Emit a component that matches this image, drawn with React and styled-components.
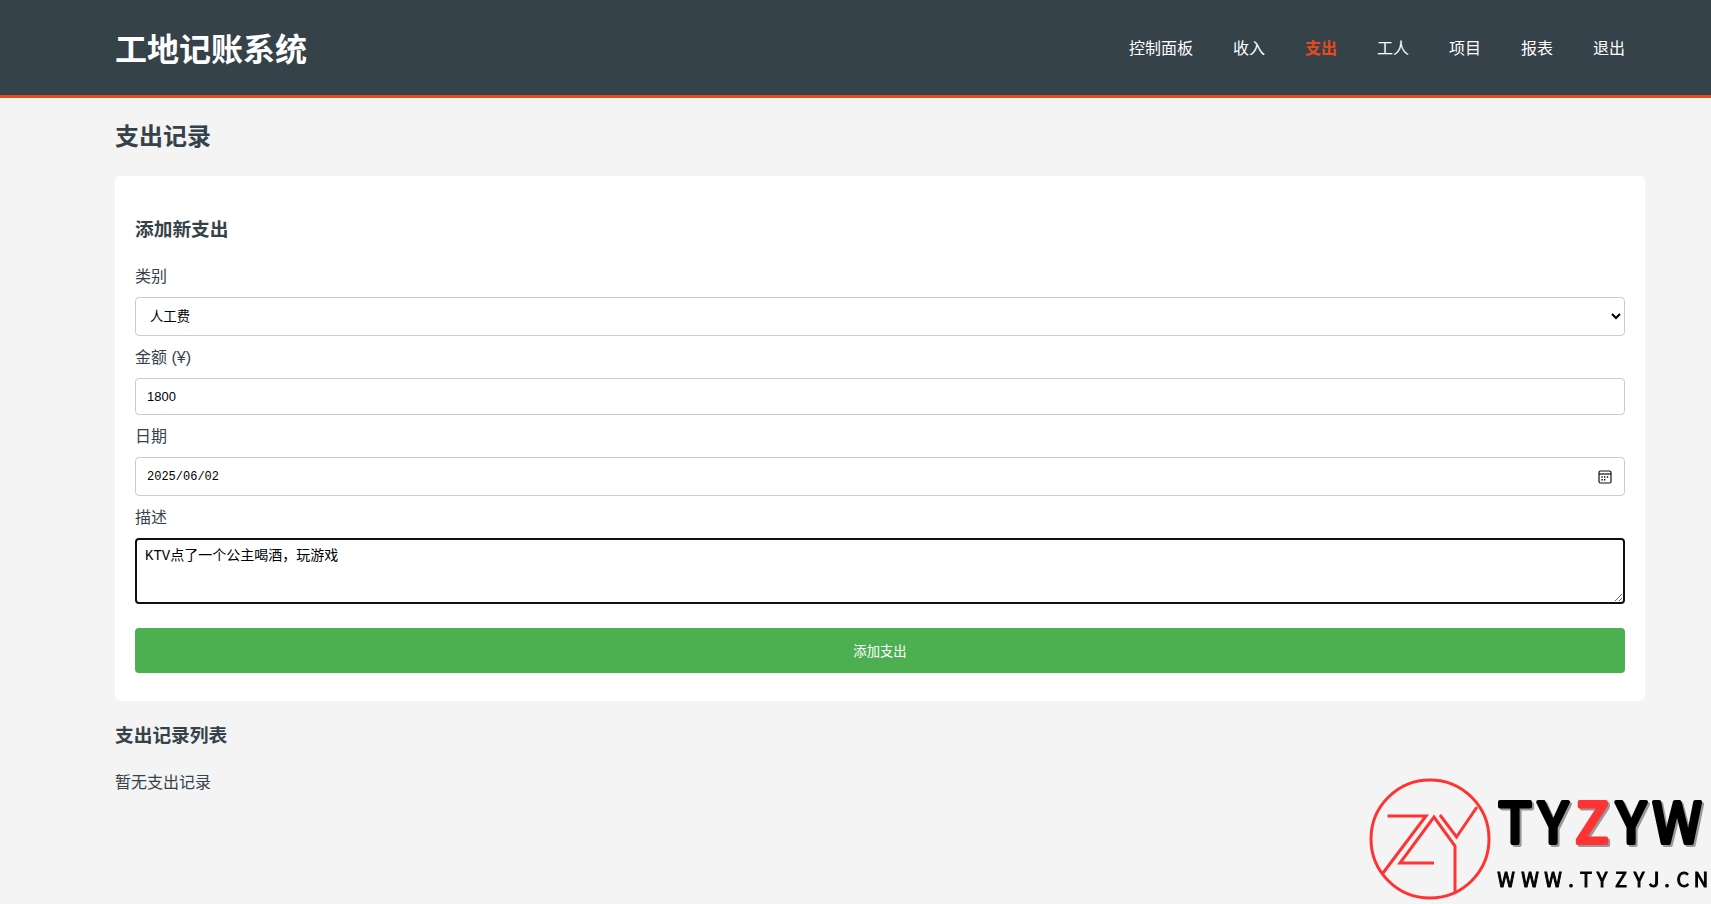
import React, { useState } from "react";
import styled, { createGlobalStyle, ThemeProvider } from "styled-components";

const theme = {
  colors: {
    dark: "#35424a",
    accent: "#e8491d",
    page: "#f4f4f4",
    border: "#cccccc",
    green: "#4caf50",
    red: "#ff3333",
  },
  fonts: {
    body: `"Liberation Sans", "Noto Sans CJK SC", sans-serif`,
    mono: `"Liberation Mono", "Noto Sans CJK SC", monospace`,
  },
};

const GlobalStyle = createGlobalStyle`
  * {
    box-sizing: border-box;
  }

  body {
    margin: 0;
    background: ${({ theme }) => theme.colors.page};
    color: ${({ theme }) => theme.colors.dark};
    font-family: ${({ theme }) => theme.fonts.body};
    font-size: 16px;
    line-height: 26px;
  }
`;

const StyledHeader = styled.header`
  display: flex;
  align-items: center;
  justify-content: space-between;
  padding: 21px 66px 19px 115px;
  background: ${({ theme }) => theme.colors.dark};
  border-bottom: 3px solid ${({ theme }) => theme.colors.accent};
  color: white;

  h1 {
    margin: 0;
    padding-top: 4px;
    font-size: 32px;
    line-height: 51px;
  }

  ul {
    display: flex;
    margin: 0;
    padding: 0;
    list-style: none;
  }

  li {
    padding: 0 20px;
  }
`;

const NavLink = styled.a`
  color: ${({ theme, $current }) => ($current ? theme.colors.accent : "white")};
  font-weight: ${({ $current }) => ($current ? 700 : 400)};
  text-decoration: none;
`;

const StyledMain = styled.main`
  padding: 0 66px 0 115px;
`;

const PageTitle = styled.h2`
  margin: 20px 0;
  font-size: 24px;
  line-height: 38px;
`;

const SectionTitle = styled.h3`
  margin: ${({ $inCard }) => ($inCard ? "19px 0 10px" : "20px 0 19px")};
  line-height: 30px;
`;

const Card = styled.section`
  display: flow-root;
  padding: 20px 20px 28px;
  background: white;
  border-radius: 5px;
`;

const StyledForm = styled.form`
  display: flex;
  flex-direction: column;

  label {
    padding: 9px 0 7px;
  }
`;

const fieldBox = ({ theme }) => `
  width: 100%;
  border: 1px solid ${theme.colors.border};
  border-radius: 4px;
  background: white;
  color: black;
`;

const Select = styled.select`
  ${fieldBox}
  height: 39px;
  padding: 10px;
  font-family: ${({ theme }) => theme.fonts.body};
`;

const Input = styled.input`
  ${fieldBox}
  height: ${({ $mono }) => ($mono ? "39px" : "37px")};
  padding: 10px 11px;
  font-family: ${({ theme, $mono }) =>
    $mono ? theme.fonts.mono : theme.fonts.body};
  font-size: ${({ $mono }) => ($mono ? "12px" : "13px")};
`;

const DateField = styled.div`
  position: relative;

  input {
    display: block;
  }

  button {
    position: absolute;
    top: 0;
    right: 13px;
    bottom: 0;
    display: flex;
    align-items: center;
    padding: 0;
    border: 0;
    background: none;
    cursor: pointer;
  }
`;

const TextArea = styled.textarea`
  ${fieldBox}
  height: 66px;
  padding: 7px 8px;
  border: 2px solid #101010;
  outline: none;
  font-family: ${({ theme }) => theme.fonts.mono};
  font-size: 14px;
  line-height: 18px;
  resize: vertical;
`;

const SubmitButton = styled.button`
  height: 45px;
  margin-top: 24px;
  border: 0;
  border-radius: 4px;
  background: ${({ theme }) => theme.colors.green};
  color: white;
  font-family: ${({ theme }) => theme.fonts.body};
  cursor: pointer;
`;

const EmptyText = styled.p`
  margin: 0;
`;

const Watermark = styled.svg`
  position: fixed;
  right: 0;
  bottom: 0;
  pointer-events: none;

  .mark {
    fill: none;
    stroke: ${({ theme }) => theme.colors.red};
    stroke-width: 3;
  }

  text {
    font-family: "Noto Sans CJK SC", sans-serif;
    text-anchor: middle;
  }

  .name {
    filter: drop-shadow(2px 2px 0 #999999);
    font-size: 56px;
    font-weight: 400;
    stroke-width: 4;
    stroke-linejoin: round;
  }

  .site {
    font-size: 20px;
    font-weight: 400;
    stroke: black;
    stroke-width: 1;
  }
`;

const links = [
  { slug: "dashboard", name: "控制面板" },
  { slug: "income", name: "收入" },
  { slug: "expense", name: "支出" },
  { slug: "workers", name: "工人" },
  { slug: "projects", name: "项目" },
  { slug: "reports", name: "报表" },
  { slug: "logout", name: "退出" },
];

const categories = ["人工费", "材料费", "设备费", "其他"];

const Header = ({ current }) => (
  <StyledHeader>
    <h1>工地记账系统</h1>
    <nav>
      <ul>
        {links.map((link) => (
          <li key={link.slug}>
            <NavLink href={`#${link.slug}`} $current={link.slug === current}>
              {link.name}
            </NavLink>
          </li>
        ))}
      </ul>
    </nav>
  </StyledHeader>
);

const CalendarIcon = () => (
  <svg width="14" height="14" viewBox="0 0 14 14" aria-hidden="true">
    <rect
      x="1"
      y="1"
      width="12"
      height="12"
      rx="1.5"
      fill="none"
      stroke="#101010"
      strokeWidth="1.2"
    />
    <path d="M1 4h12" stroke="#101010" strokeWidth="1.2" />
    <path
      d="M6 7h1.4M8.8 7h1.4M3.4 7h1.4M3.4 9.8h1.4M6 9.8h1.4"
      stroke="#101010"
      strokeWidth="1.4"
    />
  </svg>
);

const ExpenseForm = () => {
  const [expense, setExpense] = useState({
    category: "人工费",
    amount: "1800",
    date: "2025/06/02",
    description: "KTV点了一个公主喝酒，玩游戏",
  });

  const handleChange = (e) =>
    setExpense({ ...expense, [e.target.name]: e.target.value });

  return (
    <StyledForm onSubmit={(e) => e.preventDefault()}>
      <label htmlFor="category">类别</label>
      <Select
        id="category"
        name="category"
        value={expense.category}
        onChange={handleChange}
      >
        {categories.map((category) => (
          <option key={category}>{category}</option>
        ))}
      </Select>
      <label htmlFor="amount">金额 (¥)</label>
      <Input
        id="amount"
        name="amount"
        type="number"
        value={expense.amount}
        onChange={handleChange}
      />
      <label htmlFor="date">日期</label>
      <DateField>
        <Input
          $mono
          id="date"
          name="date"
          type="text"
          value={expense.date}
          onChange={handleChange}
        />
        <button type="button" aria-label="选择日期">
          <CalendarIcon />
        </button>
      </DateField>
      <label htmlFor="description">描述</label>
      <TextArea
        id="description"
        name="description"
        value={expense.description}
        onChange={handleChange}
      />
      <SubmitButton type="submit">添加支出</SubmitButton>
    </StyledForm>
  );
};

const NAME_X = [165, 203, 242, 281, 327];
const SITE_X = [156, 180, 203, 221, 236, 252, 271, 289, 304, 317, 333, 351];

const Logo = () => (
  <Watermark width="361" height="144" viewBox="0 0 361 144" aria-hidden="true">
    <circle className="mark" cx="80" cy="79" r="59" />
    <path
      className="mark"
      d="M37.5 56H76L33 113M84 103H50L84 57l21 29v46M90 55l16.5 22L127 47"
    />
    {"TYZYW".split("").map((letter, i) => {
      const color = letter === "Z" ? theme.colors.red : "black";
      return (
        <text
          className="name"
          key={i}
          x={NAME_X[i]}
          y="83"
          fill={color}
          stroke={color}
        >
          {letter}
        </text>
      );
    })}
    <text className="site" x={SITE_X.join(" ")} y="127">
      WWW.TYZYJ.CN
    </text>
  </Watermark>
);

const App = () => (
  <ThemeProvider theme={theme}>
    <GlobalStyle />
    <Header current="expense" />
    <StyledMain>
      <PageTitle>支出记录</PageTitle>
      <Card>
        <SectionTitle $inCard>添加新支出</SectionTitle>
        <ExpenseForm />
      </Card>
      <SectionTitle>支出记录列表</SectionTitle>
      <EmptyText>暂无支出记录</EmptyText>
    </StyledMain>
    <Logo />
  </ThemeProvider>
);

export default App;
